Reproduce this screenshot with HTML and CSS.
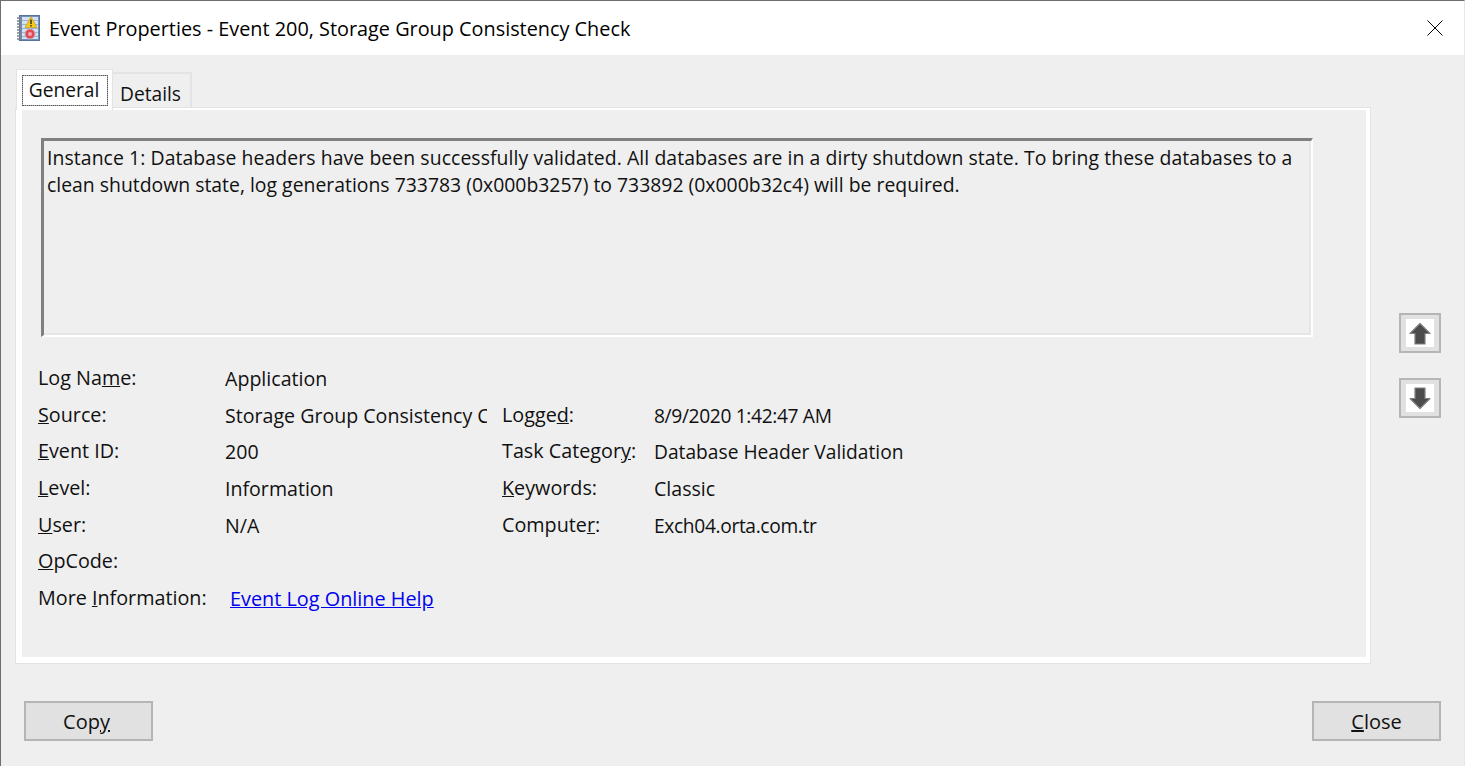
FILE: index.html
```html
<!DOCTYPE html>
<html lang="en">
<head>
<meta charset="utf-8">
<title>Event Properties</title>
<link rel="stylesheet" href="styles.css">
</head>
<body>
<div class="window">
  <header class="titlebar">
    <svg class="app-icon" viewBox="0 0 26 28" width="26" height="28" aria-hidden="true">
      <rect x="4.5" y="1.5" width="20" height="25" fill="#6f8fbc" stroke="#58749c"/>
      <rect x="7" y="3" width="16" height="22" fill="#d5e2f3"/>
      <path d="M7 6.5h16M7 10.5h16M7 14.5h16M7 18.5h16M7 22.5h16" stroke="#9cb4d6" stroke-width="1"/>
      <path d="M2 4h5M2 7h5M2 10h5M2 13h5M2 16h5M2 19h5M2 22h5M2 25h5" stroke="#7a828c" stroke-width="1.3"/>
      <path d="M16 2.5l6 11h-12z" fill="#f6cc1c" stroke="#c49c10" stroke-width=".7"/>
      <path d="M16 5.5v4.5M16 11v1.6" stroke="#3a3020" stroke-width="1.5"/>
      <circle cx="15" cy="20" r="5" fill="#de4a55" stroke="#c9aeb2"/>
      <circle cx="15" cy="20" r="2" fill="#f0a9ae"/>
    </svg>
    <h1 class="title">Event Properties - Event 200, Storage Group Consistency Check</h1>
    <svg class="close-x" viewBox="0 0 16 16" width="16" height="16" aria-hidden="true">
      <path d="M.5.5l15 15M15.5.5l-15 15" stroke="#000" stroke-width="1" fill="none"/>
    </svg>
  </header>
  <main class="client">
    <div class="upper">
      <div class="tabset">
        <div class="tabs">
          <div class="tab tab-active"><span class="focus">General</span></div>
          <div class="tab tab-idle">Details</div>
        </div>
        <section class="panel">
          <div class="message"><span class="first-line">Instance 1: Database headers have been successfully validated. All databases are in a dirty shutdown state. To bring these databases to a</span> clean shutdown state, log generations 733783 (0x000b3257) to 733892 (0x000b32c4) will be required.</div>
          <div class="fields">
            <div class="label">Log Na<u>m</u>e:</div>
            <div class="value wide">Application</div>

            <div class="label"><u>S</u>ource:</div>
            <div class="value clip">Storage Group Consistency Check</div>
            <div class="label second">Logge<u>d</u>:</div>
            <div class="value numeric">8/9/2020 1:42:47 AM</div>

            <div class="label"><u>E</u>vent ID:</div>
            <div class="value">200</div>
            <div class="label second">Task Categor<u>y</u>:</div>
            <div class="value narrow">Database Header Validation</div>

            <div class="label"><u>L</u>evel:</div>
            <div class="value">Information</div>
            <div class="label second"><u>K</u>eywords:</div>
            <div class="value">Classic</div>

            <div class="label"><u>U</u>ser:</div>
            <div class="value">N/A</div>
            <div class="label second">Compute<u>r</u>:</div>
            <div class="value numeric">Exch04.orta.com.tr</div>

            <div class="label"><u>O</u>pCode:</div>
            <div class="value wide"></div>

            <div class="label">More <u>I</u>nformation:</div>
            <div class="value wide"><a class="link" href="#">Event Log Online Help</a></div>
          </div>
        </section>
      </div>
      <div class="nav">
        <button class="nav-btn" type="button" aria-label="Previous event">
          <svg viewBox="0 0 28 28" width="28" height="28" aria-hidden="true"><path d="M14 4.5L24 14.5H19V25H9V14.5H4z" fill="#4c4c4c" stroke="#808080" stroke-width="1.2" stroke-linejoin="round"/></svg>
        </button>
        <button class="nav-btn" type="button" aria-label="Next event">
          <svg viewBox="0 0 28 28" width="28" height="28" aria-hidden="true"><path d="M14 24.5L24 14.5H19V4H9V14.5H4z" fill="#4c4c4c" stroke="#808080" stroke-width="1.2" stroke-linejoin="round"/></svg>
        </button>
      </div>
    </div>
    <footer class="actions">
      <button class="btn btn-copy" type="button">Cop<u>y</u></button>
      <button class="btn" type="button"><u>C</u>lose</button>
    </footer>
  </main>
</div>
</body>
</html>
```

FILE: styles.css
```css
* { box-sizing: border-box; }
html, body { margin: 0; padding: 0; height: 100%; background: #fff; overflow: hidden; }
body { font-family: "Open Sans", "Noto Sans", sans-serif; font-size: 19.6px; color: #111; }

.window {
  width: 1465px;
  height: 766px;
  display: flex;
  flex-direction: column;
  border-top: 1px solid #6e6e6e;
  border-left: 1px solid #6e6e6e;
  border-right: 1px solid #e8e8e8;
}

.titlebar {
  height: 54px;
  flex: none;
  display: flex;
  align-items: center;
  padding: 0 21px 0 14px;
  background: #fff;
}
.app-icon { flex: none; }
.title {
  margin: 0 0 0 8px;
  flex: 1;
  font-size: 19.85px;
  font-weight: 400;
  line-height: 28px;
  padding-top: 1px;
  white-space: nowrap;
  color: #000;
}
.close-x { flex: none; }

.client {
  flex: 1;
  display: flex;
  flex-direction: column;
  background: #efefef;
  min-height: 0;
}

.upper {
  display: flex;
  padding: 14px 0 0 15px;
  height: 608px;
}
.tabset { width: 1354px; flex: none; display: flex; flex-direction: column; }

.tabs { display: flex; height: 39px; align-items: flex-end; flex: none; font-size: 19.2px; }
.tab { display: flex; align-items: center; justify-content: center; }
.tab-active {
  width: 97px;
  height: 41px;
  background: #fff;
  border: 1px solid #e3e3e3;
  border-bottom: 0;
  padding: 5px 4px 4px 5px;
  margin-bottom: -2px;
  position: relative;
  z-index: 1;
}
.focus {
  display: flex;
  align-items: center;
  justify-content: center;
  width: 100%;
  height: 100%;
  outline: 1px dotted #555;
  outline-offset: -1px;
  border: 1px solid #aaa;
  padding: 0 2px 2px 0;
}
.tab-idle {
  width: 79px;
  height: 36px;
  border: 2px solid #e3e3e3;
  border-bottom: 0;
  border-left: 0;
  padding: 4px 2px 0 0;
  background: #efefef;
}

.panel {
  height: 555px;
  background: #efefef;
  border-style: solid;
  border-color: #fff;
  border-width: 2px 4px 6px 6px;
  outline: 1px solid #e3e3e3;
  padding: 28px 53px 0 19px;
}

.message {
  width: 1272px;
  height: 199px;
  border-style: solid;
  border-width: 3px 2px 2px 3px;
  border-color: #808080 #fff #fff #808080;
  box-shadow: inset -2px -2px 0 #e6e6e6;
  padding: 3px 0 0 3px;
  font-size: 19.4px;
  line-height: 27px;
  color: #111;
}
.first-line { letter-spacing: .08px; }

.fields {
  margin: 24px 0 0 -3px;
  display: grid;
  grid-template-columns: 187px 277px 152px 1fr;
  grid-auto-rows: 36.6px;
  align-items: center;
  line-height: 28px;
}
.label { padding-bottom: 2px; font-size: 19.75px; }
.value { white-space: nowrap; }
.wide { grid-column: 2 / 5; }
.clip { overflow: hidden; width: 262px; }
.narrow { font-size: 19.2px; }
.numeric { font-size: 19.2px; letter-spacing: -.35px; }
.link { font-size: 19.85px; color: #0000ee; text-decoration: underline; margin-left: 5px; }

.nav {
  margin-left: 29px;
  padding-top: 244px;
  display: flex;
  flex-direction: column;
  gap: 25px;
}
.nav-btn {
  width: 42px;
  height: 40px;
  padding: 0;
  display: flex;
  align-items: center;
  justify-content: center;
  background: #e1e1e1;
  border: 2px solid #b5b5b5;
}
.nav-btn svg { background: #fff; }

.actions {
  display: flex;
  justify-content: space-between;
  padding: 38px 23px 0 23px;
}
.btn {
  width: 129px;
  height: 40px;
  padding: 0;
  font: inherit;
  font-size: 20px;
  color: #111;
  background: #e1e1e1;
  border: 2px solid #b5b5b5;
}
.btn-copy { padding-right: 4px; }
```
